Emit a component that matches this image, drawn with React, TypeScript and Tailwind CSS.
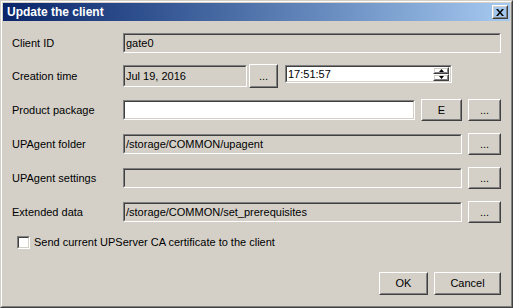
type BoxProps = { className?: string; children?: React.ReactNode };

// classic 3D sunken edit box
function Sunken({ className = "", children }: BoxProps) {
  return (
    <div className={`border border-t-[#808080] border-l-[#808080] border-b-white border-r-white ${className}`}>
      <div className="flex h-full w-full items-center border border-t-[#404040] border-l-[#404040] border-b-[#d4d0c8] border-r-[#d4d0c8] pl-px">
        {children}
      </div>
    </div>
  );
}

// classic 3D raised push button
function Raised({ className = "", children }: BoxProps) {
  return (
    <div className={`border border-t-white border-l-white border-b-[#404040] border-r-[#404040] ${className}`}>
      <div className="flex h-full w-full items-center justify-center border border-t-[#d4d0c8] border-l-[#d4d0c8] border-b-[#808080] border-r-[#808080]">
        {children}
      </div>
    </div>
  );
}

function Label({ children }: BoxProps) {
  return <div className="w-[111px] shrink-0">{children}</div>;
}

function PathRow({ label, value }: { label: string; value: string }) {
  return (
    <div className="mt-[12px] flex h-[22px] items-center">
      <Label>{label}</Label>
      <Sunken className="h-[20px] w-[339px] bg-[#d4d0c8]">{value}</Sunken>
      <Raised className="ml-[6px] h-[22px] w-[33px]">...</Raised>
    </div>
  );
}

export default function App() {
  return (
    <div className="h-[308px] w-[513px] bg-[#d4d0c8] font-['Liberation_Sans',Arial,sans-serif] text-[11px] text-black">
      <div className="h-full w-full border border-t-[#d4d0c8] border-l-[#d4d0c8] border-b-[#404040] border-r-[#404040]">
        <div className="h-full w-full border border-t-white border-l-white border-b-[#808080] border-r-[#808080] p-px">
          {/* title bar */}
          <div className="flex h-[18px] items-center justify-between bg-linear-to-r from-[#0a246a] to-[#a6caf0] pl-[4px] pr-[2px]">
            <span className="text-[12px] font-bold text-white">Update the client</span>
            <Raised className="h-[14px] w-[16px]">
              <svg width="8" height="7" viewBox="0 0 8 7">
                <path d="M0 0h2l2 2.5L6 0h2L5 3.5 8 7H6L4 4.5 2 7H0l3-3.5z" fill="#000" />
              </svg>
            </Raised>
          </div>

          <div className="px-[9px] pt-[11px]">
            <div className="flex h-[22px] items-center">
              <Label>Client ID</Label>
              <Sunken className="h-[20px] flex-1 bg-[#d4d0c8]">gate0</Sunken>
            </div>

            <div className="mt-[10px] flex h-[24px] items-start">
              <div className="flex h-full w-[111px] shrink-0 items-center">Creation time</div>
              <Sunken className="mt-px h-[22px] w-[124px] bg-[#d4d0c8]">Jul 19, 2016</Sunken>
              <Raised className="ml-[2px] h-[24px] w-[29px]">...</Raised>
              <Sunken className="ml-[7px] mt-px h-[18px] w-[167px] bg-white">
                <span className="flex-1">17:51:57</span>
                <div className="mr-px flex flex-col">
                  <Raised className="h-[7px] w-[16px]">
                    <svg width="5" height="3" viewBox="0 0 5 3">
                      <path d="M2.5 0L5 3H0z" fill="#000" />
                    </svg>
                  </Raised>
                  <Raised className="h-[7px] w-[16px]">
                    <svg width="5" height="3" viewBox="0 0 5 3">
                      <path d="M0 0h5L2.5 3z" fill="#000" />
                    </svg>
                  </Raised>
                </div>
              </Sunken>
            </div>

            <div className="mt-[11px] flex h-[22px] items-center">
              <Label>Product package</Label>
              <Sunken className="h-[20px] w-[292px] bg-white" />
              <Raised className="ml-[6px] h-[22px] w-[41px]">E</Raised>
              <Raised className="ml-[6px] h-[22px] w-[33px]">...</Raised>
            </div>

            <PathRow label="UPAgent folder" value="/storage/COMMON/upagent" />
            <PathRow label="UPAgent settings" value="" />
            <PathRow label="Extended data" value="/storage/COMMON/set_prerequisites" />

            <label className="ml-[5px] mt-[13px] flex h-[13px] items-center gap-[4px]">
              <Sunken className="h-[13px] w-[13px] bg-white" />
              <span>Send current UPServer CA certificate to the client</span>
            </label>

            <div className="mt-[23px] flex justify-end gap-[6px]">
              <Raised className="h-[23px] w-[49px]">OK</Raised>
              <Raised className="h-[23px] w-[67px]">Cancel</Raised>
            </div>
          </div>
        </div>
      </div>
    </div>
  );
}
